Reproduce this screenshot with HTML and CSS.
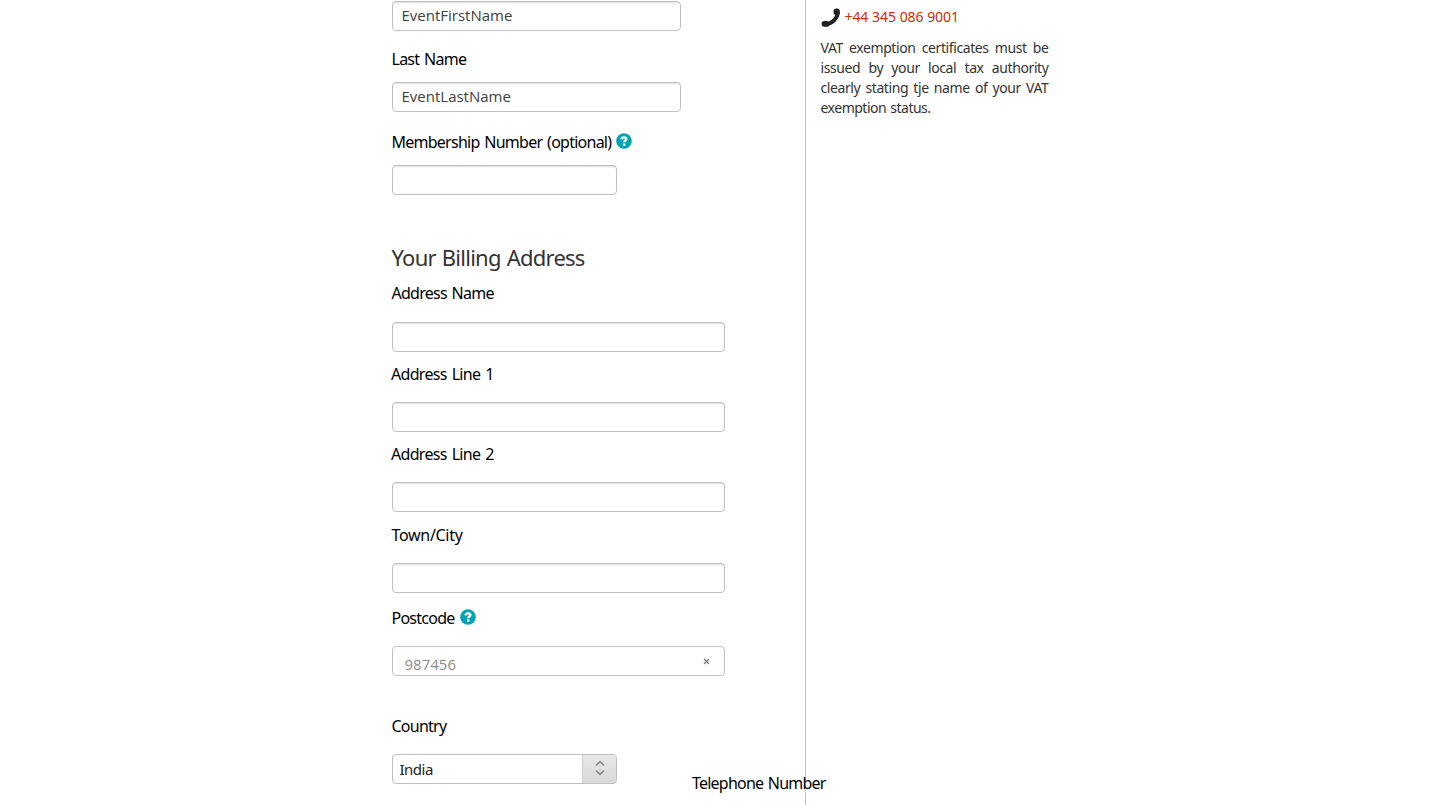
FILE: index.html
```
<!DOCTYPE html>
<html lang="en">
<head>
<meta charset="utf-8">
<title>Billing details</title>
<link rel="stylesheet" href="styles.css">
</head>
<body>
<div class="page">
  <main class="form">
    <div class="box box-name"><span>EventFirstName</span></div>
    <div class="label label-last"><span>Last Name</span></div>
    <div class="box box-name"><span>EventLastName</span></div>
    <div class="label label-member"><span>Membership Number (optional)</span>
      <svg class="help" viewBox="0 0 16 16"><circle cx="8" cy="8" r="7.8"/><path d="M5.600 6.400C5.700 4.900 6.700 4.300 8 4.300c1.400 0 2.400.7 2.400 1.800 0 1.500-2.100 1.400-2.100 3.100M8.200 10.500v2.300"/></svg>
    </div>
    <div class="box box-short"></div>
    <h2 class="heading"><span>Your Billing Address</span></h2>
    <div class="label label-address"><span>Address Name</span></div>
    <div class="box"></div>
    <div class="label label-line"><span>Address Line 1</span></div>
    <div class="box"></div>
    <div class="label label-line"><span>Address Line 2</span></div>
    <div class="box"></div>
    <div class="label label-town"><span>Town/City</span></div>
    <div class="box"></div>
    <div class="label label-postcode"><span>Postcode</span>
      <svg class="help" viewBox="0 0 16 16"><circle cx="8" cy="8" r="7.8"/><path d="M5.600 6.400C5.700 4.900 6.700 4.300 8 4.300c1.400 0 2.400.7 2.400 1.800 0 1.500-2.100 1.400-2.100 3.100M8.200 10.500v2.300"/></svg>
    </div>
    <div class="box box-postcode"><span>987456</span>
      <svg class="clear" viewBox="0 0 7 7"><path d="M1 1l5 5M6 1L1 6"/></svg>
    </div>
    <div class="label label-country"><span>Country</span></div>
    <div class="box box-short select"><span>India</span>
      <div class="stepper"><svg viewBox="0 0 10 16"><path d="M1 5.500L5 1.700l4 3.800M1 10.500l4 3.800 4-3.800"/></svg></div>
    </div>
    <div class="telephone"><span>Telephone Number</span></div>
  </main>
  <aside class="side">
    <div class="phone">
      <svg viewBox="0 0 20 20"><path class="handle" d="M16.800 4C16.800 10 11 16 4 16.400"/><rect x="12.600" y=".5" width="6.200" height="6.600" rx="2.800"/><rect x=".6" y="12.900" width="8" height="5.800" rx="2.700"/></svg>
      <span>+44 345 086 9001</span>
    </div>
    <p class="note"><span class="l1">VAT exemption certificates must be</span><span class="l2">issued by your local tax authority</span><span class="l3">clearly stating tje name of your VAT</span><span class="l4">exemption status.</span></p>
  </aside>
</div>
</body>
</html>
```
FILE: styles.css
```
* { box-sizing: border-box; }
body {
  margin: 0;
  background: #fff;
  color: #000;
  font: 16px/24px "Noto Sans", Tahoma, sans-serif;
  overflow: hidden;
}
.page { display: flex; height: 805px; padding-left: 392px; }
.form { position: relative; width: 414px; padding-top: 1px; border-right: 1px solid #c3c3c3; }
.label {
  display: flex;
  align-items: center;
  gap: 5px;
  height: 24px;
  margin: 10px 0 16px -0.5px;
  white-space: nowrap;
  letter-spacing: -0.75px;
  word-spacing: 1.4px;
}
.label-last { margin-top: 16px; margin-bottom: 11px; }
.label-member { margin-top: 18px; margin-bottom: 11px; }
.label-address { margin-top: 7px; margin-bottom: 17px; }
.label-line { margin-left: -1px; letter-spacing: -0.68px; }
.label-town { margin-top: 11px; letter-spacing: -0.3px; }
.label-postcode { margin-top: 13px; }
.label-country { margin-top: 38px; }
.help { width: 16px; height: 16px; margin-top: -2px; }
.help circle { fill: #00a3b4; }
.help path { fill: none; stroke: #fff; stroke-width: 2.300; }
.box {
  display: flex;
  align-items: center;
  width: 333px;
  height: 30px;
  padding: 0 9px;
  border: 1px solid #bfbfbf;
  border-radius: 4px;
  background: #fff;
  box-shadow: inset 0 2px 2px -1px #ddd;
  color: #404040;
  font: 15px/28px "Open Sans", sans-serif;
}
.box-name { width: 289px; padding: 0 8.5px 2px; }
.box-short { width: 225px; }
.box-postcode { justify-content: space-between; padding: 0 14px 0 11.5px; box-shadow: none; color: #8b8b8b; }
.box-postcode span { padding-top: 5px; }
.clear { width: 7px; height: 7px; margin-top: 1px; }
.clear path { stroke: #777; stroke-width: 1.2; }
.select { justify-content: space-between; padding: 0 0 0 6.5px; box-shadow: none; color: #222; font: 15px/28px "Noto Sans", sans-serif; letter-spacing: -0.5px; }
.stepper { display: flex; align-items: center; justify-content: center; width: 34px; height: 28px; border-left: 1px solid #d0d0d0; border-radius: 0 3px 3px 0; background: linear-gradient(#e8e8e8, #d9d9d9); }
.stepper svg { width: 10px; height: 16px; margin-top: -2px; }
.stepper path { fill: none; stroke: #8a8a8a; stroke-width: 1.7; }
.heading { height: 33px; margin: 46px 0 0 -0.5px; color: #333; font-size: 22px; font-weight: 400; line-height: 32px; letter-spacing: -0.75px; word-spacing: 1px; }
.telephone { position: absolute; left: 300px; top: 771px; white-space: nowrap; letter-spacing: -0.78px; word-spacing: 1.2px; }
.side { width: 244px; padding: 5px 0 0 14.5px; }
.phone { display: flex; align-items: center; gap: 4px; height: 24px; color: #cf2a00; font-size: 14px; white-space: nowrap; letter-spacing: -0.1px; word-spacing: 0.3px; }
.phone svg { width: 20px; height: 20px; margin-top: 1px; fill: #222; }
.phone .handle { fill: none; stroke: #222; stroke-width: 4; }
.note { margin: 9px 0 0; color: #333; font-size: 14px; line-height: 20px; }
.note span { display: block; width: 228px; white-space: nowrap; letter-spacing: -0.4px; text-align-last: justify; }
.note .l4 { text-align-last: left; letter-spacing: -0.5px; word-spacing: 1px; }
```
